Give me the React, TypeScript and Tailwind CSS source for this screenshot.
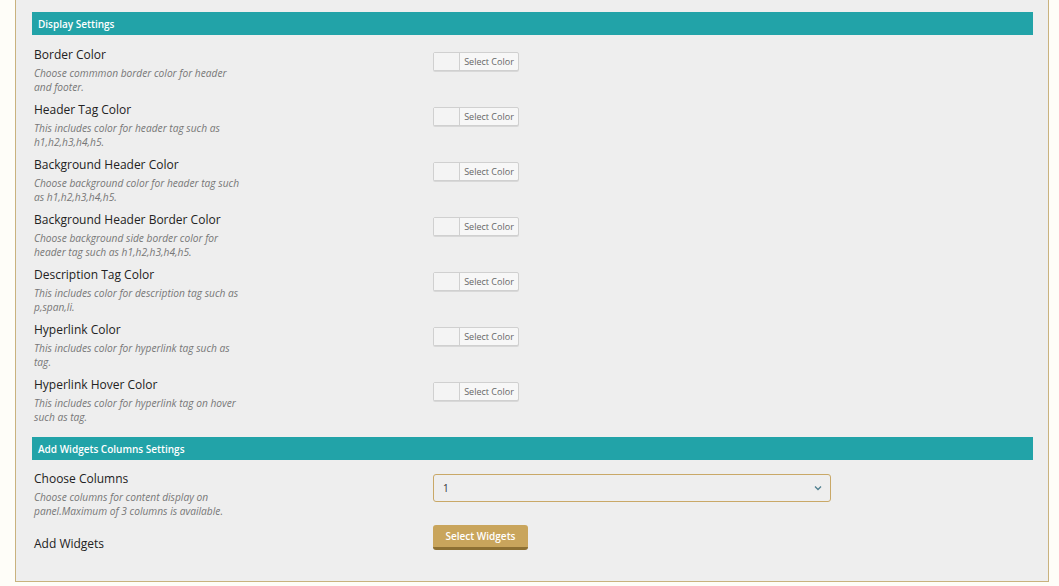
import React from 'react';

const colorRows = [
    { label: 'Border Color', desc: ['Choose commmon border color for header', 'and footer.'] },
    { label: 'Header Tag Color', desc: ['This includes color for header tag such as', 'h1,h2,h3,h4,h5.'] },
    { label: 'Background Header Color', desc: ['Choose background color for header tag such', 'as h1,h2,h3,h4,h5.'] },
    { label: 'Background Header Border Color', desc: ['Choose background side border color for', 'header tag such as h1,h2,h3,h4,h5.'] },
    { label: 'Description Tag Color', desc: ['This includes color for description tag such as', 'p,span,li.'] },
    { label: 'Hyperlink Color', desc: ['This includes color for hyperlink tag such as', 'tag.'] },
    { label: 'Hyperlink Hover Color', desc: ['This includes color for hyperlink tag on hover', 'such as tag.'] },
];

const SectionHeader: React.FC<{ title: string }> = ({ title }) => (
    <div className="h-[23px] bg-[#22a3a8] flex items-center pl-[6px] pt-[1px] text-[10px] font-semibold text-white">
        {title}
    </div>
);

const Description: React.FC<{ lines: string[] }> = ({ lines }) => (
    <div className="mt-[2px] text-[10.2px] italic leading-[14px] text-[#777]">
        {lines.map((l, i) => (
            <div key={i}>{l}</div>
        ))}
    </div>
);

const ColorPicker: React.FC = () => (
    <div className="mt-[6px] flex h-[19px] w-[86px] rounded-[2px] border border-[#d0d0d0] bg-[#f7f7f7] shadow-[0_1px_0_#d8d8d8]">
        <div className="w-[26px] border-r border-[#d0d0d0] bg-[#f4f4f4]" />
        <div className="flex flex-1 items-center justify-center text-[9px] text-[#666]">Select Color</div>
    </div>
);

const App: React.FC = () => {
    return (
        <div className="min-h-screen bg-[#fefdf8] pl-[15px] pr-[10px]" style={{ fontFamily: '"Open Sans", sans-serif' }}>
            <div className="w-[1034px] border-x border-b border-[#c9b27e] bg-[#eeeeee] pl-[16px] pr-[15px] pt-[12px] pb-[28px]">
                <SectionHeader title="Display Settings" />

                <div className="pt-[11px] flex flex-col gap-[6px]">
                    {colorRows.map(row => (
                        <div key={row.label} className="flex h-[49px]">
                            <div className="w-[401px] pl-[2px]">
                                <div className="text-[12px] leading-[18px] text-[#222]">{row.label}</div>
                                <Description lines={row.desc} />
                            </div>
                            <ColorPicker />
                        </div>
                    ))}
                </div>

                <div className="mt-[12px]">
                    <SectionHeader title="Add Widgets Columns Settings" />
                </div>

                <div className="pt-[10px] flex flex-col gap-[6px]">
                    <div className="flex h-[49px]">
                        <div className="w-[401px] pl-[2px]">
                            <div className="text-[12px] leading-[18px] text-[#222]">Choose Columns</div>
                            <Description lines={['Choose columns for content display on', 'panel.Maximum of 3 columns is available.']} />
                        </div>
                        <div className="mt-[4px] flex h-[28px] w-[398px] items-center justify-between rounded-[3px] border border-[#c9a867] bg-[#eeeeee] pl-[9px] pr-[8px] text-[10px] text-[#333]">
                            <span>1</span>
                            <svg width="8" height="6" viewBox="0 0 8 6" fill="none">
                                <path d="M1 1.5 L4 4.5 L7 1.5" stroke="#4f7f8f" strokeWidth="1.3" />
                            </svg>
                        </div>
                    </div>

                    <div className="flex">
                        <div className="w-[401px] pl-[2px] pt-[10px] text-[12px] leading-[18px] text-[#222]">Add Widgets</div>
                        <button
                            type="button"
                            className="h-[25px] w-[95px] rounded-[3px] border-b-[3px] border-[#8d7033] bg-[#c9a55c] text-[10px] font-semibold text-white"
                        >
                            Select Widgets
                        </button>
                    </div>
                </div>
            </div>
        </div>
    );
};

export default App;
